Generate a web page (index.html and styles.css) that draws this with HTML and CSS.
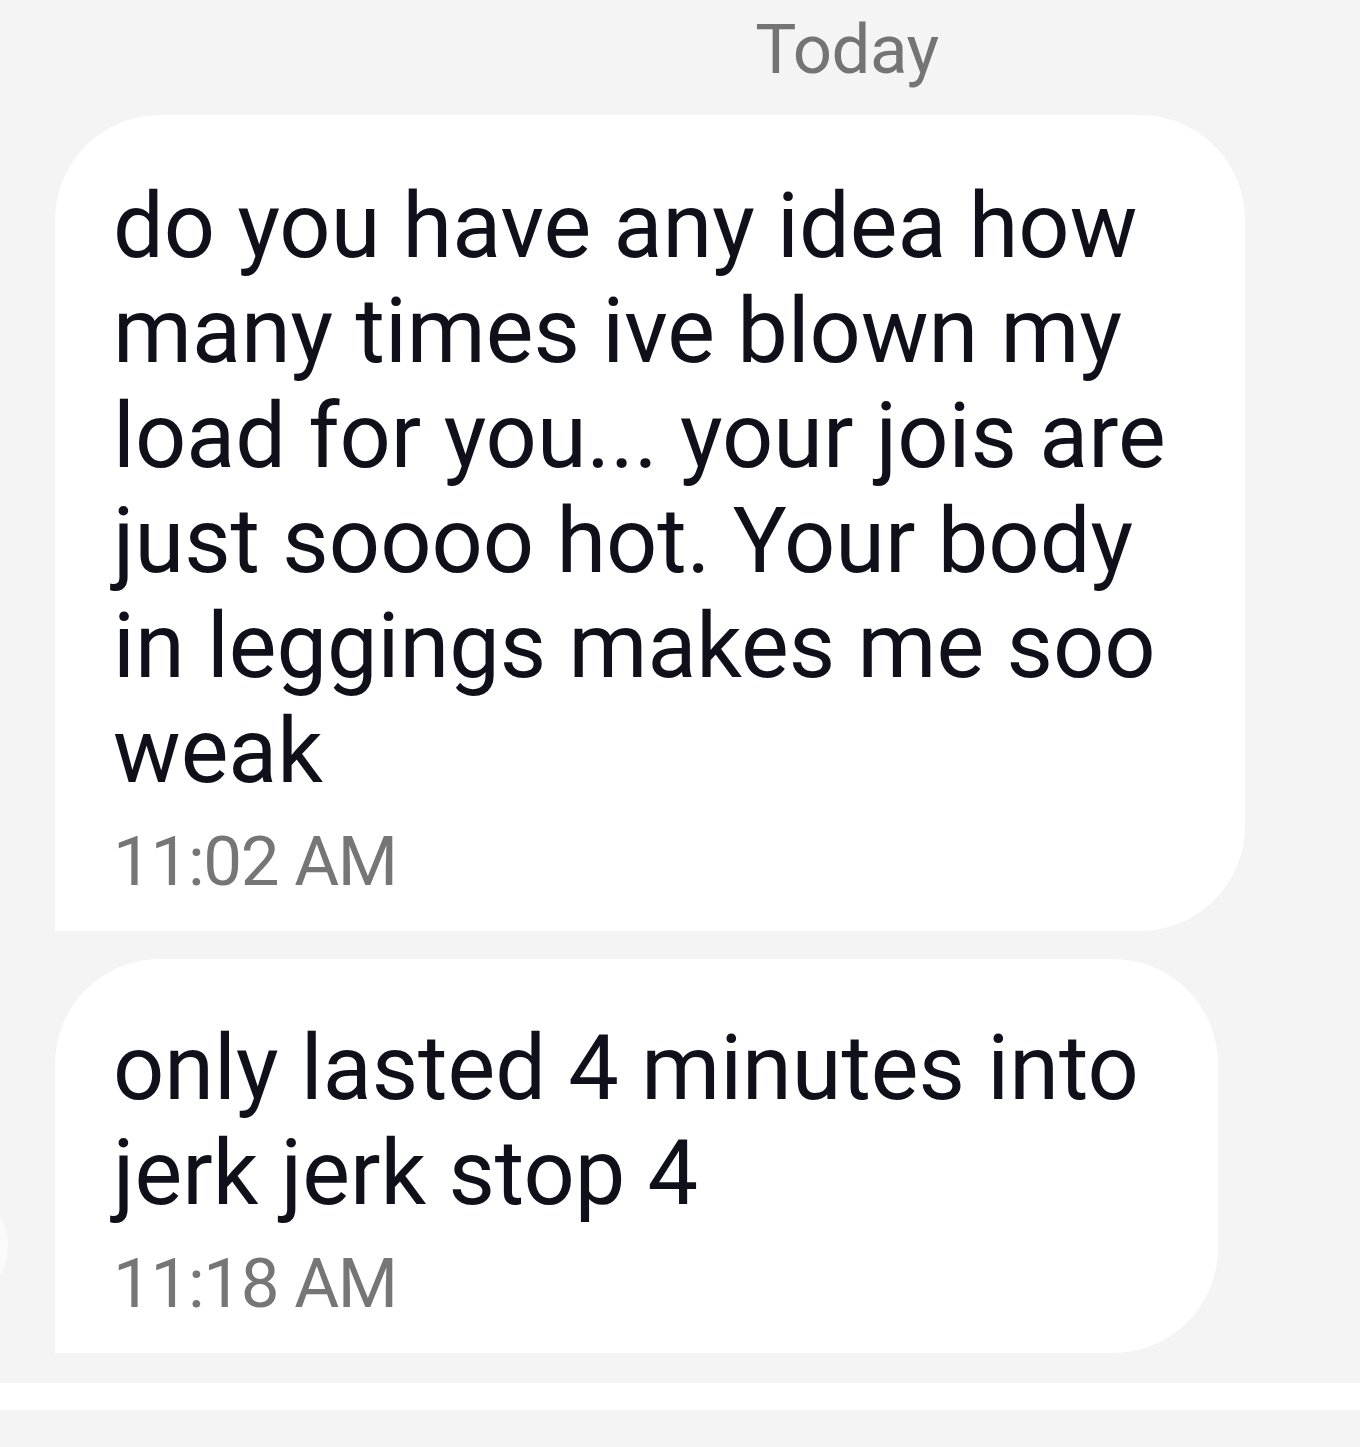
FILE: index.html
```html
<!DOCTYPE html>
<html>
<head>
<meta charset="utf-8">
<link rel="stylesheet" href="styles.css">
</head>
<body>
<div class="thread">
  <div class="date">Today</div>
  <div class="row">
    <div class="bubble bubble-1">
      <p class="text">do you have any idea how<br>many times ive blown my<br>load for you... your jois are<br>just soooo hot. Your body<br>in leggings makes me soo<br>weak</p>
      <div class="time">11:02 AM</div>
    </div>
  </div>
  <div class="row row-last">
    <div class="avatar"></div>
    <div class="bubble bubble-2">
      <p class="text">only lasted 4 minutes into<br>jerk jerk stop 4</p>
      <div class="time">11:18 AM</div>
    </div>
  </div>
  <div class="composer"></div>
</div>
</body>
</html>
```

FILE: styles.css
```css
html, body {
  margin: 0;
  padding: 0;
  background: #f4f4f4;
}

.thread {
  font-family: Roboto, "Noto Sans", sans-serif;
  display: flex;
  flex-direction: column;
  overflow: hidden;
  height: 1447px;
}

.date {
  padding-left: 334px;
  text-align: center;
  color: #747474;
  font-size: 69px;
  line-height: 82px;
  letter-spacing: -0.5px;
  margin-top: 9px;
  height: 106px;
}

.row {
  display: flex;
  align-items: flex-end;
  padding-left: 55px;
}

.row-last {
  margin-top: 28px;
}

.avatar {
  flex: none;
  width: 104px;
  height: 110px;
  border-radius: 50%;
  background: #fafafa;
  margin-left: -151px;
  margin-right: 47px;
  margin-bottom: 52px;
}

.bubble {
  box-sizing: border-box;
  background: #ffffff;
  border-radius: 105px 105px 105px 0;
  padding: 59px 40px 29px 58px;
}

.bubble-1 {
  width: 1190px;
}

.bubble-2 {
  width: 1163px;
  padding-top: 57px;
}

.text {
  margin: 0;
  font-size: 90px;
  line-height: 105px;
  color: #10101a;
  white-space: nowrap;
}

.time {
  margin-top: 18px;
  font-size: 69px;
  line-height: 80px;
  letter-spacing: -1.3px;
  color: #767676;
}

.composer {
  margin-top: 30px;
  height: 27px;
  background: #ffffff;
}
```
